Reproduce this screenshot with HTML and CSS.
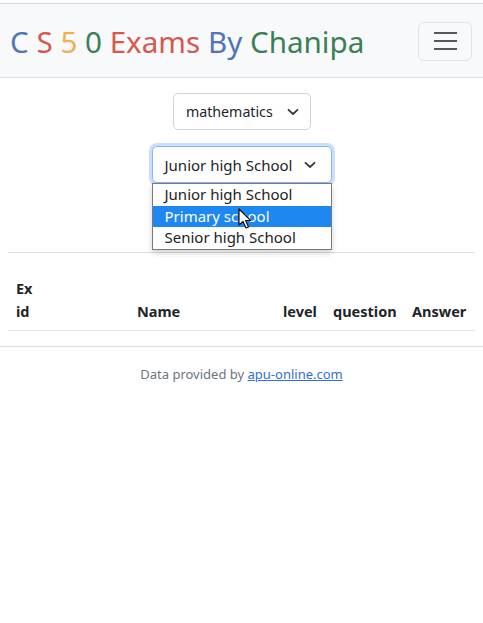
FILE: index.html
```html
<!DOCTYPE html>
<html lang="en">
<head>
<meta charset="utf-8">
<title>CS50 Exams</title>
<link rel="stylesheet" href="styles.css">
</head>
<body>
<header class="navbar">
  <div class="brand"><span class="c-blue">C</span> <span class="c-red">S</span> <span class="c-yellow">5</span> <span class="c-green">0</span> <span class="c-red">Exams</span> <span class="c-blue">By</span> <span class="c-green">Chanipa</span></div>
  <button class="toggler" type="button" aria-label="menu">
    <span class="bar"></span><span class="bar"></span><span class="bar"></span>
  </button>
</header>
<main class="content">
  <div class="selects">
    <div class="select select-subject">mathematics
      <svg class="chev" width="12" height="8" viewBox="0 0 12 8"><path d="M1.5 1.8 6 6 10.5 1.8" fill="none" stroke="#343a40" stroke-width="1.8" stroke-linecap="round" stroke-linejoin="round"/></svg>
    </div>
    <div class="select-wrap">
      <div class="select select-level">Junior high School
        <svg class="chev" width="12" height="8" viewBox="0 0 12 8"><path d="M1.5 1.8 6 6 10.5 1.8" fill="none" stroke="#343a40" stroke-width="1.8" stroke-linecap="round" stroke-linejoin="round"/></svg>
      </div>
      <ul class="dropdown">
        <li>Junior high School</li>
        <li class="active">Primary school</li>
        <li>Senior high School</li>
      </ul>
      <svg class="cursor" width="14" height="22" viewBox="0 0 14 22"><path d="M1 1 L1 17 L5 13.5 L8 20 L10.5 19 L7.6 12.6 L12.5 12.4 Z" fill="#fff" stroke="#111" stroke-width="1.2" stroke-linejoin="round"/></svg>
    </div>
  </div>
  <hr class="rule">
  <div class="table">
    <div class="th">Ex<br>id</div>
    <div class="th">Name</div>
    <div class="th">level</div>
    <div class="th">question</div>
    <div class="th">Answer</div>
  </div>
</main>
<hr class="full-rule">
<footer class="footer">Data provided by <a href="#">apu-online.com</a></footer>
</body>
</html>
```
FILE: styles.css
```css
* { box-sizing: border-box; }
html, body { margin: 0; padding: 0; background: #fff; }
body {
  padding-top: 3px;
  font-family: "Noto Sans", "Open Sans", sans-serif;
  color: #212529;
}
.navbar {
  display: flex;
  align-items: center;
  justify-content: space-between;
  height: 75px;
  padding: 0 10px;
  background: #f8f9fa;
  border-top: 1px solid #d9d9d9;
  border-bottom: 1px solid #e2e2e2;
}
.brand {
  font-size: 29.6px;
  line-height: 1;
  padding-top: 2px;
}
.c-blue { color: #5175b8; }
.c-red { color: #d6574e; }
.c-yellow { color: #efb14f; }
.c-green { color: #3b7f55; }
.toggler {
  width: 54px;
  height: 39px;
  margin-right: 1px;
  margin-top: 1px;
  border: 1px solid #e3e3e3;
  border-radius: 6px;
  background: transparent;
  display: flex;
  flex-direction: column;
  align-items: center;
  justify-content: center;
  gap: 6px;
  padding: 0;
}
.toggler .bar {
  display: block;
  width: 23px;
  height: 2px;
  background: #595959;
}
.content { padding: 0 8px; }
.selects {
  display: flex;
  flex-direction: column;
  align-items: center;
  gap: 16px;
  padding-top: 15px;
}
.select {
  display: flex;
  align-items: center;
  height: 37px;
  border: 1px solid #ced4da;
  border-radius: 5px;
  background: #fff;
  font-size: 15px;
  color: #212529;
  white-space: nowrap;
}
.chev { margin-left: 11px; }
.select-subject {
  width: 138px;
  padding-left: 12px;
  margin-left: 1px;
  font-size: 14.2px;
}
.select-subject .chev { margin-left: 14px; }
.select-wrap { position: relative; }
.select-level {
  width: 180px;
  padding-left: 12px;
  border-color: #86b7fe;
  box-shadow: 0 0 0 3px rgba(13, 110, 253, 0.22);
}
.select-level .chev { margin-left: 12px; }
.dropdown {
  position: absolute;
  top: 37px;
  left: 0;
  width: 180px;
  margin: 0;
  padding: 0;
  list-style: none;
  background: #fff;
  border: 1px solid #7a7a7a;
  box-shadow: 0 3px 6px rgba(0, 0, 0, 0.18);
  font-size: 15px;
  color: #222;
}
.dropdown li {
  height: 21.6px;
  line-height: 21.6px;
  padding-left: 12px;
}
.dropdown li.active {
  background: #1e87f0;
  color: #fff;
}
.cursor {
  position: absolute;
  left: 86px;
  top: 62px;
}
.rule {
  margin: 69px 0 0;
  border: 0;
  border-top: 1px solid #dedede;
}
.table {
  display: grid;
  grid-template-columns: 121px 146px 50px 79px 71px;
  align-items: end;
  border-bottom: 1px solid #e4e4e4;
  margin-top: 16px;
}
.th {
  padding: 8px 8px 7px;
  font-weight: 700;
  font-size: 14.5px;
  line-height: 23px;
  white-space: nowrap;
}
.full-rule {
  margin: 15px 0 0;
  border: 0;
  border-top: 1px solid #dedede;
}
.footer {
  text-align: center;
  font-size: 13px;
  color: #6c757d;
  margin-top: 18px;
}
.footer a { color: #2f6fd8; text-decoration: underline; }
```
